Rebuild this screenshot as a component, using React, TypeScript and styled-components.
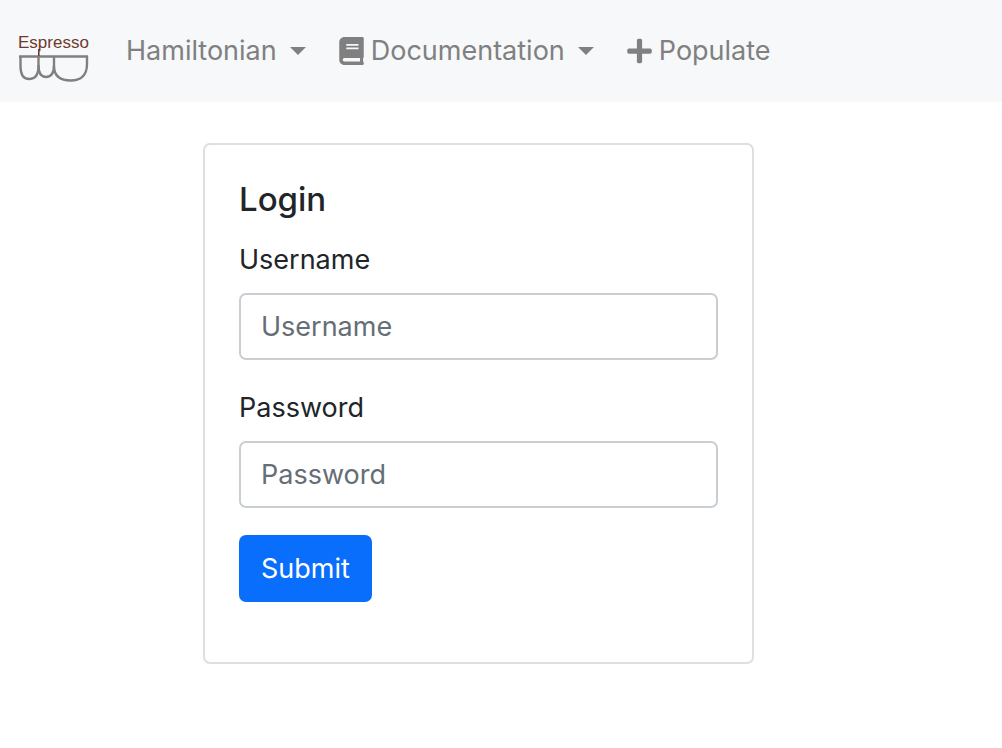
import React from "react";
import styled, { createGlobalStyle } from "styled-components";
import { FaBook, FaPlus } from "react-icons/fa";

const GlobalStyle = createGlobalStyle`
  *, *::before, *::after { box-sizing: border-box; }
  body {
    margin: 0;
    background: #fff;
    color: #212529;
    font-family: Inter, "Liberation Sans", sans-serif;
    font-size: 27px;
    line-height: 42px;
  }
`;

const Navbar = styled.header`
  display: flex;
  align-items: center;
  min-height: 102px;
  padding: 0 18px;
  background: #f7f8fa;
`;

const Brand = styled.a`
  display: flex;
  margin-right: 36px;
`;

const LogoText = styled.text`
  font-family: "Liberation Sans", sans-serif;
  font-size: 17px;
  fill: #6e3a2b;
`;

const Nav = styled.nav`
  display: flex;
  align-items: center;
  gap: 33px;
`;

const navItem = `
  display: flex;
  align-items: center;
  padding: 0;
  border: 0;
  background: none;
  color: #808081;
  font: inherit;
  text-decoration: none;
  white-space: nowrap;
  cursor: pointer;
`;

const NavMenu = styled.button`${navItem}`;
const NavLink = styled.a`${navItem}`;

const NavIcon = styled.span`
  display: flex;
  margin-right: 7px;

  svg {
    width: 25px;
    height: 28px;
  }
`;

const Caret = styled.span`
  margin-left: 13px;
  border-top: 8px solid currentColor;
  border-left: 8px solid transparent;
  border-right: 8px solid transparent;
`;

const Main = styled.main`
  display: grid;
  grid-template-columns: 203fr 551fr 248fr;
  padding: 41px 0;
`;

const Card = styled.section`
  grid-column: 2;
  padding: 34px 34px 60px;
  border: 2px solid #dfdfdf;
  border-radius: 7px;
`;

const Title = styled.h1`
  margin: 0 0 19px;
  font-size: 33px;
  font-weight: 500;
  line-height: 41px;
`;

const Field = styled.div`
  margin-bottom: 27px;
`;

const Label = styled.label`
  display: block;
  margin-bottom: 12px;
`;

const Input = styled.input`
  display: block;
  width: 100%;
  height: 67px;
  padding: 0 20px;
  border: 2px solid #c9ced3;
  border-radius: 7px;
  background: #fff;
  color: inherit;
  font: inherit;

  &::placeholder {
    color: #656e75;
    opacity: 1;
  }
`;

const Submit = styled.button`
  display: block;
  height: 67px;
  padding: 0 22px;
  border: 0;
  border-radius: 7px;
  background: #0a6efd;
  color: #fff;
  font: inherit;
  cursor: pointer;
`;

function Logo() {
  return (
    <svg width="72" height="62" viewBox="0 0 72 62" role="img" aria-label="Espresso">
      <LogoText x="0" y="28">Espresso</LogoText>
      <g fill="none" stroke="#808080" strokeWidth="2.4">
        <path d="M1 36.5H70" />
        <path d="M2.5 36V46C2.5 55 5 59 11 59C17 59 20.5 55 20.5 46V36" />
        <path d="M20.5 45C20.5 53 23 57 28 57C33 57 36 53 36 45V36" />
        <path d="M36 46C36 56 42 60.5 53 60.5C63 60.5 69 55 69 44V36" />
      </g>
      <path d="M20.8 29V36" stroke="#6e3a2b" strokeWidth="1.6" />
    </svg>
  );
}

export default function App() {
  return (
    <>
      <GlobalStyle />
      <Navbar>
        <Brand href="#">
          <Logo />
        </Brand>
        <Nav>
          <NavMenu type="button" aria-haspopup="menu">
            Hamiltonian
            <Caret />
          </NavMenu>
          <NavMenu type="button" aria-haspopup="menu">
            <NavIcon><FaBook /></NavIcon>
            Documentation
            <Caret />
          </NavMenu>
          <NavLink href="#populate">
            <NavIcon><FaPlus /></NavIcon>
            Populate
          </NavLink>
        </Nav>
      </Navbar>
      <Main>
        <Card>
          <Title>Login</Title>
          <form>
            <Field>
              <Label htmlFor="username">Username</Label>
              <Input id="username" type="text" placeholder="Username" />
            </Field>
            <Field>
              <Label htmlFor="password">Password</Label>
              <Input id="password" type="password" placeholder="Password" />
            </Field>
            <Submit type="submit">Submit</Submit>
          </form>
        </Card>
      </Main>
    </>
  );
}
